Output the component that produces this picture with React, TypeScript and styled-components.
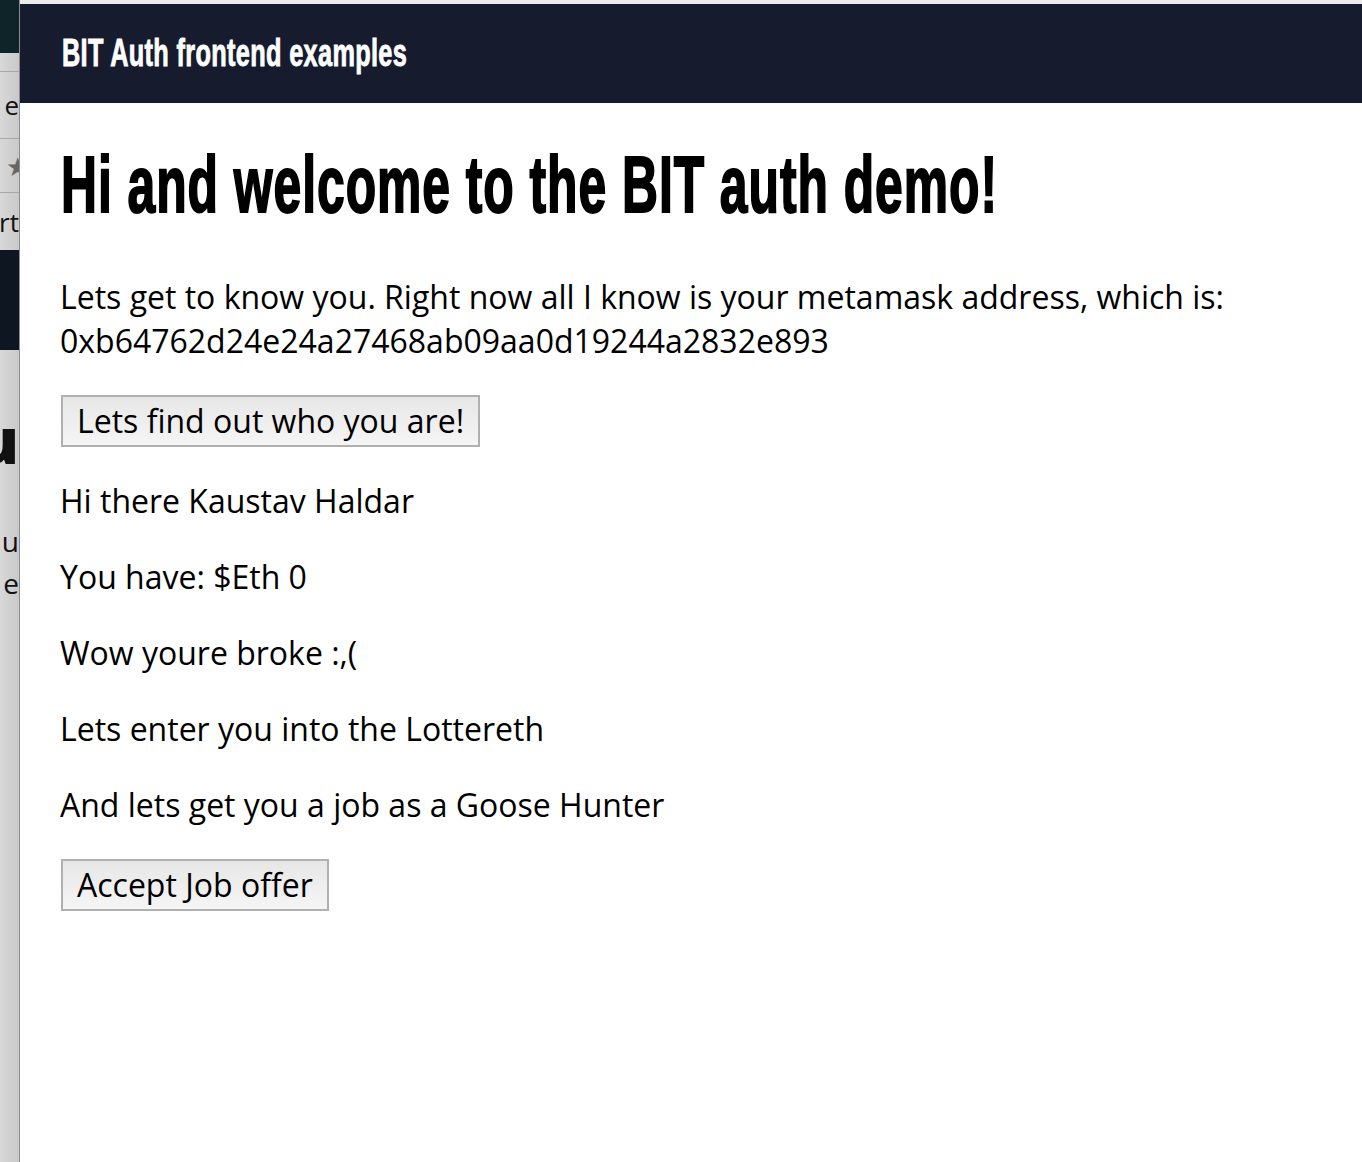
import React from "react";
import styled, { createGlobalStyle } from "styled-components";

const Global = createGlobalStyle`
  html, body { margin: 0; padding: 0; background: #ffffff; }
  body { font-family: "Open Sans", "Liberation Sans", sans-serif; color: #000; }
`;

const Screen = styled.div`
  display: flex;
  width: 1362px;
  height: 1162px;
  overflow: hidden;
`;

const BehindWindow = styled.div`
  width: 19px;
  flex: none;
  display: flex;
  flex-direction: column;
  background: linear-gradient(to right, #d8d8d8, #c9c9c9);
  border-right: 1px solid #8c8c8c;
  overflow: hidden;
`;

const BehindBlock = styled.div<{ $h: number; $bg?: string; $line?: boolean }>`
  height: ${(p) => p.$h}px;
  flex: none;
  background: ${(p) => p.$bg || "transparent"};
  border-bottom: ${(p) => (p.$line ? "1px solid #a8a8a8" : "none")};
  display: flex;
  align-items: center;
  justify-content: flex-end;
  overflow: hidden;
  white-space: nowrap;
`;

const BehindGlyph = styled.span<{ $bold?: boolean; $size?: number; $color?: string; $shift?: number }>`
  font-family: "Open Sans", sans-serif;
  font-weight: ${(p) => (p.$bold ? 800 : 400)};
  font-size: ${(p) => p.$size || 26}px;
  color: ${(p) => p.$color || "#111"};
  line-height: 1;
  margin-right: ${(p) => p.$shift || 0}px;
`;

const Main = styled.div`
  flex: 1;
  display: flex;
  flex-direction: column;
  border-top: 4px solid #ececec;
`;

const TopBar = styled.header`
  height: 99px;
  background: #161c2d;
  display: flex;
  align-items: center;
  padding-left: 42px;
`;

const Brand = styled.span`
  display: inline-block;
  font-family: "Liberation Sans", "Arial", sans-serif;
  font-weight: 700;
  font-size: 38px;
  letter-spacing: 0.5px;
  color: #ffffff;
  white-space: nowrap;
  -webkit-text-stroke: 0.9px #ffffff;
  transform: scaleX(0.666);
  transform-origin: left center;
`;

const Content = styled.main`
  padding: 0 41px 0 40px;
`;

const Title = styled.h1`
  margin: 37px 0 45px;
  font-family: "Liberation Sans", "Arial", sans-serif;
  font-weight: 700;
  font-size: 79px;
  line-height: 90px;
  white-space: nowrap;
`;

const TitleText = styled.span`
  display: inline-block;
  letter-spacing: 1.5px;
  -webkit-text-stroke: 2px #000;
  transform: scaleX(0.631);
  transform-origin: left center;
  margin-left: 1px;
`;

const Text = styled.p`
  margin: 32px 0;
  font-size: 32px;
  line-height: 44px;
`;

const Button = styled.button`
  display: block;
  font-family: "Open Sans", sans-serif;
  font-size: 32px;
  line-height: 44px;
  padding: 2px 14px;
  border: 2px solid #b0b0b0;
  border-radius: 0;
  background: linear-gradient(to bottom, #e7e7e7, #f5f5f5);
  color: #000;
  margin: 0 0 0 1px;
`;

export default function App() {
  return (
    <>
      <Global />
      <Screen>
        <BehindWindow>
          <BehindBlock $h={53} $bg="#0f2429" />
          <BehindBlock $h={18} $line />
          <BehindBlock $h={66} $line>
            <BehindGlyph>e</BehindGlyph>
          </BehindBlock>
          <BehindBlock $h={53} $line>
            <BehindGlyph $color="#666" $shift={-10}>★</BehindGlyph>
          </BehindBlock>
          <BehindBlock $h={57}>
            <BehindGlyph>rt</BehindGlyph>
          </BehindBlock>
          <BehindBlock $h={100} $bg="#0e1622" />
          <BehindBlock $h={60} />
          <BehindBlock $h={60}>
            <BehindGlyph $bold $size={64}>u</BehindGlyph>
          </BehindBlock>
          <BehindBlock $h={50} />
          <BehindBlock $h={42}>
            <BehindGlyph $size={28}>u</BehindGlyph>
          </BehindBlock>
          <BehindBlock $h={42}>
            <BehindGlyph $size={28}>e</BehindGlyph>
          </BehindBlock>
        </BehindWindow>
        <Main>
          <TopBar>
            <Brand>BIT Auth frontend examples</Brand>
          </TopBar>
          <Content>
            <Title>
              <TitleText>Hi and welcome to the BIT auth demo!</TitleText>
            </Title>
            <Text>
              Lets get to know you. Right now all I know is your metamask address, which is:
              <br />
              0xb64762d24e24a27468ab09aa0d19244a2832e893
            </Text>
            <Button>Lets find out who you are!</Button>
            <Text>Hi there Kaustav Haldar</Text>
            <Text>You have: $Eth 0</Text>
            <Text>Wow youre broke :,(</Text>
            <Text>Lets enter you into the Lottereth</Text>
            <Text>And lets get you a job as a Goose Hunter</Text>
            <Button>Accept Job offer</Button>
          </Content>
        </Main>
      </Screen>
    </>
  );
}
